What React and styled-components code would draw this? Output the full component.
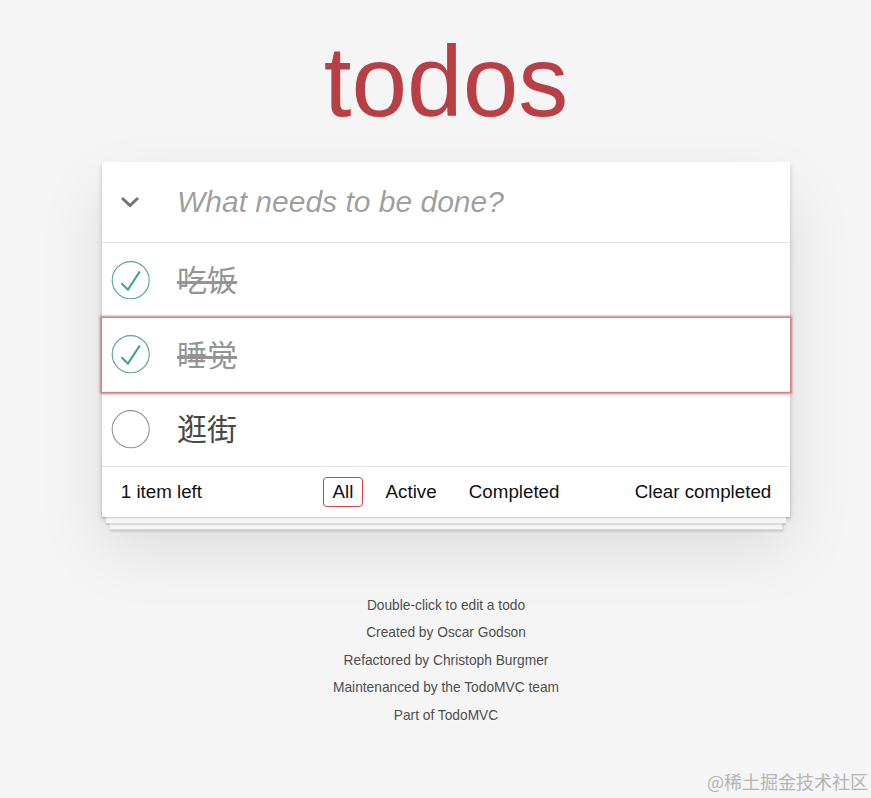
import React, { useState } from 'react';
import styled, { createGlobalStyle } from 'styled-components';

const GlobalStyle = createGlobalStyle`
  html, body {
    margin: 0;
    padding: 0;
    background: #f5f5f5;
  }
  body {
    font-family: "Liberation Sans", Arial, "Noto Sans CJK SC", sans-serif;
    color: #111;
    -webkit-font-smoothing: antialiased;
  }
`;

//#region style
const Page = styled.div`
  position: relative;
  min-height: 798px;
  box-sizing: border-box;
  padding: 31px 0 0 21px;
  display: flex;
  flex-direction: column;
  align-items: center;
`;

const Title = styled.h1`
  margin: 0;
  font-size: 100px;
  line-height: 100px;
  font-weight: 400;
  color: #b83f45;
  text-align: center;
  text-rendering: optimizeLegibility;
`;

const TodoApp = styled.section`
  width: 688px;
  margin-top: 31px;
  background: #fff;
  box-shadow: 0 2.5px 5px rgba(0, 0, 0, 0.2), 0 31px 62px rgba(0, 0, 0, 0.1);
`;

const Header = styled.header`
  display: flex;
  align-items: center;
  height: 80px;
`;

const ToggleAll = styled.button`
  width: 75px;
  height: 80px;
  padding: 0 0 0 18px;
  border: none;
  background: none;
  display: flex;
  align-items: center;
  cursor: pointer;
`;

const NewTodo = styled.input`
  flex: 1;
  height: 100%;
  box-sizing: border-box;
  padding: 0 20px 0 0;
  border: none;
  outline: none;
  background: transparent;
  font-family: inherit;
  font-size: 30px;
  color: #111;

  &::placeholder {
    font-style: italic;
    font-weight: 400;
    color: rgba(0, 0, 0, 0.4);
  }
`;

const List = styled.ul`
  margin: 0;
  padding: 0;
  list-style: none;
  border-top: 1px solid #e6e6e6;
`;

const Item = styled.li`
  position: relative;
  display: flex;
  align-items: center;
  border-bottom: 1px solid #ededed;
  ${p => p.$focused && `
    z-index: 1;
    box-shadow: 0 0 2px 2px #cf7d7d;
  `}

  &:last-child {
    border-bottom: none;
  }
`;

const Toggle = styled.button`
  flex: none;
  width: 50px;
  height: 50px;
  padding: 0;
  border: none;
  background: none;
  cursor: pointer;

  svg {
    display: block;
  }
`;

const Label = styled.label`
  flex: 1;
  padding: 20px 18.75px 17.5px 25px;
  font-size: 30px;
  line-height: 36px;
  color: ${p => (p.$done ? '#949494' : '#484848')};
  text-decoration: ${p => (p.$done ? 'line-through' : 'none')};
  word-break: break-all;
`;

const Footer = styled.footer`
  position: relative;
  display: grid;
  grid-template-columns: 1fr auto 1fr;
  align-items: center;
  height: 25px;
  padding: 10px 18.75px 15px;
  border-top: 1px solid #e6e6e6;
  font-size: 18.75px;
  line-height: 24.5px;
  color: #111;

  &::before {
    content: '';
    position: absolute;
    right: 0;
    bottom: 0;
    left: 0;
    height: 62px;
    overflow: hidden;
    pointer-events: none;
    box-shadow: 0 1.25px 1.25px rgba(0, 0, 0, 0.2),
      0 10px 0 -3.75px #f6f6f6,
      0 11.25px 1.25px -3.75px rgba(0, 0, 0, 0.2),
      0 20px 0 -7.5px #f6f6f6,
      0 21.25px 2.5px -7.5px rgba(0, 0, 0, 0.2);
  }
`;

const Count = styled.span`
  justify-self: start;
  position: relative;
`;

const Filters = styled.ul`
  position: relative;
  display: flex;
  gap: 5.2px;
  margin: 0;
  padding: 0;
  list-style: none;
`;

const FilterLink = styled.a`
  display: block;
  margin: 0 3.75px;
  padding: 3.75px 8.75px;
  line-height: 21px;
  border: 1px solid ${p => (p.$selected ? '#ce4646' : 'transparent')};
  border-radius: 3.75px;
  color: inherit;
  text-decoration: none;
  cursor: pointer;

  &:hover {
    border-color: ${p => (p.$selected ? '#ce4646' : '#db7676')};
  }
`;

const ClearButton = styled.button`
  justify-self: end;
  position: relative;
  padding: 0;
  border: none;
  background: none;
  font: inherit;
  color: inherit;
  line-height: 24.5px;
  cursor: pointer;
`;

const Info = styled.footer`
  margin-top: 82px;
  color: #4d4d4d;
  font-size: 13.75px;
  text-align: center;
  text-shadow: 0 1px 0 rgba(255, 255, 255, 0.5);

  p {
    margin: 0;
    line-height: 1;
  }
  p + p {
    margin-top: 13.75px;
  }
`;

const Watermark = styled.div`
  position: absolute;
  right: 3px;
  bottom: 6px;
  font-family: "Noto Sans CJK SC", "Liberation Sans", sans-serif;
  font-size: 18px;
  line-height: 22px;
  color: #b4b4b4;
`;
//#endregion style

const Chevron = () => (
  <svg width="20" height="12" viewBox="0 0 20 12">
    <polyline points="2,2 10,9.5 18,2" fill="none" stroke="#737373" strokeWidth="3" />
  </svg>
);

const CheckIcon = ({ done }) => (
  <svg width="50" height="50" viewBox="-10 -18 100 135">
    <circle cx="50" cy="50" r="50" fill="none" stroke={done ? '#59A193' : '#949494'} strokeWidth="3" />
    {done && <path fill="#3EA390" d="M72 25L42 71 27 56l-4 4 20 20 34-52z" />}
  </svg>
);

const initialTodos = [
  { id: 1, title: '吃饭', done: true },
  { id: 2, title: '睡觉', done: true },
  { id: 3, title: '逛街', done: false },
];

const App = () => {
  const [todos, setTodos] = useState(initialTodos);
  const [filter, setFilter] = useState('all');

  const left = todos.filter(t => !t.done).length;
  const shown = todos.filter(t => filter === 'all' || (filter === 'active' ? !t.done : t.done));

  return (
    <>
      <GlobalStyle />
      <Page>
        <Title>todos</Title>
        <TodoApp>
          <Header>
            <ToggleAll
              aria-label="Mark all as complete"
              onClick={() => setTodos(todos.map(t => ({ ...t, done: left > 0 })))}
            >
              <Chevron />
            </ToggleAll>
            <NewTodo placeholder="What needs to be done?" />
          </Header>
          <List>
            {shown.map(t => (
              <Item key={t.id} $focused={t.id === 2}>
                <Toggle
                  aria-label="toggle"
                  onClick={() => setTodos(todos.map(x => (x.id === t.id ? { ...x, done: !x.done } : x)))}
                >
                  <CheckIcon done={t.done} />
                </Toggle>
                <Label $done={t.done}>{t.title}</Label>
              </Item>
            ))}
          </List>
          <Footer>
            <Count>{left} item left</Count>
            <Filters>
              <li><FilterLink $selected={filter === 'all'} onClick={() => setFilter('all')}>All</FilterLink></li>
              <li><FilterLink $selected={filter === 'active'} onClick={() => setFilter('active')}>Active</FilterLink></li>
              <li><FilterLink $selected={filter === 'completed'} onClick={() => setFilter('completed')}>Completed</FilterLink></li>
            </Filters>
            <ClearButton onClick={() => setTodos(todos.filter(t => !t.done))}>Clear completed</ClearButton>
          </Footer>
        </TodoApp>
        <Info>
          <p>Double-click to edit a todo</p>
          <p>Created by Oscar Godson</p>
          <p>Refactored by Christoph Burgmer</p>
          <p>Maintenanced by the TodoMVC team</p>
          <p>Part of TodoMVC</p>
        </Info>
        <Watermark>@稀土掘金技术社区</Watermark>
      </Page>
    </>
  );
};

export default App;
